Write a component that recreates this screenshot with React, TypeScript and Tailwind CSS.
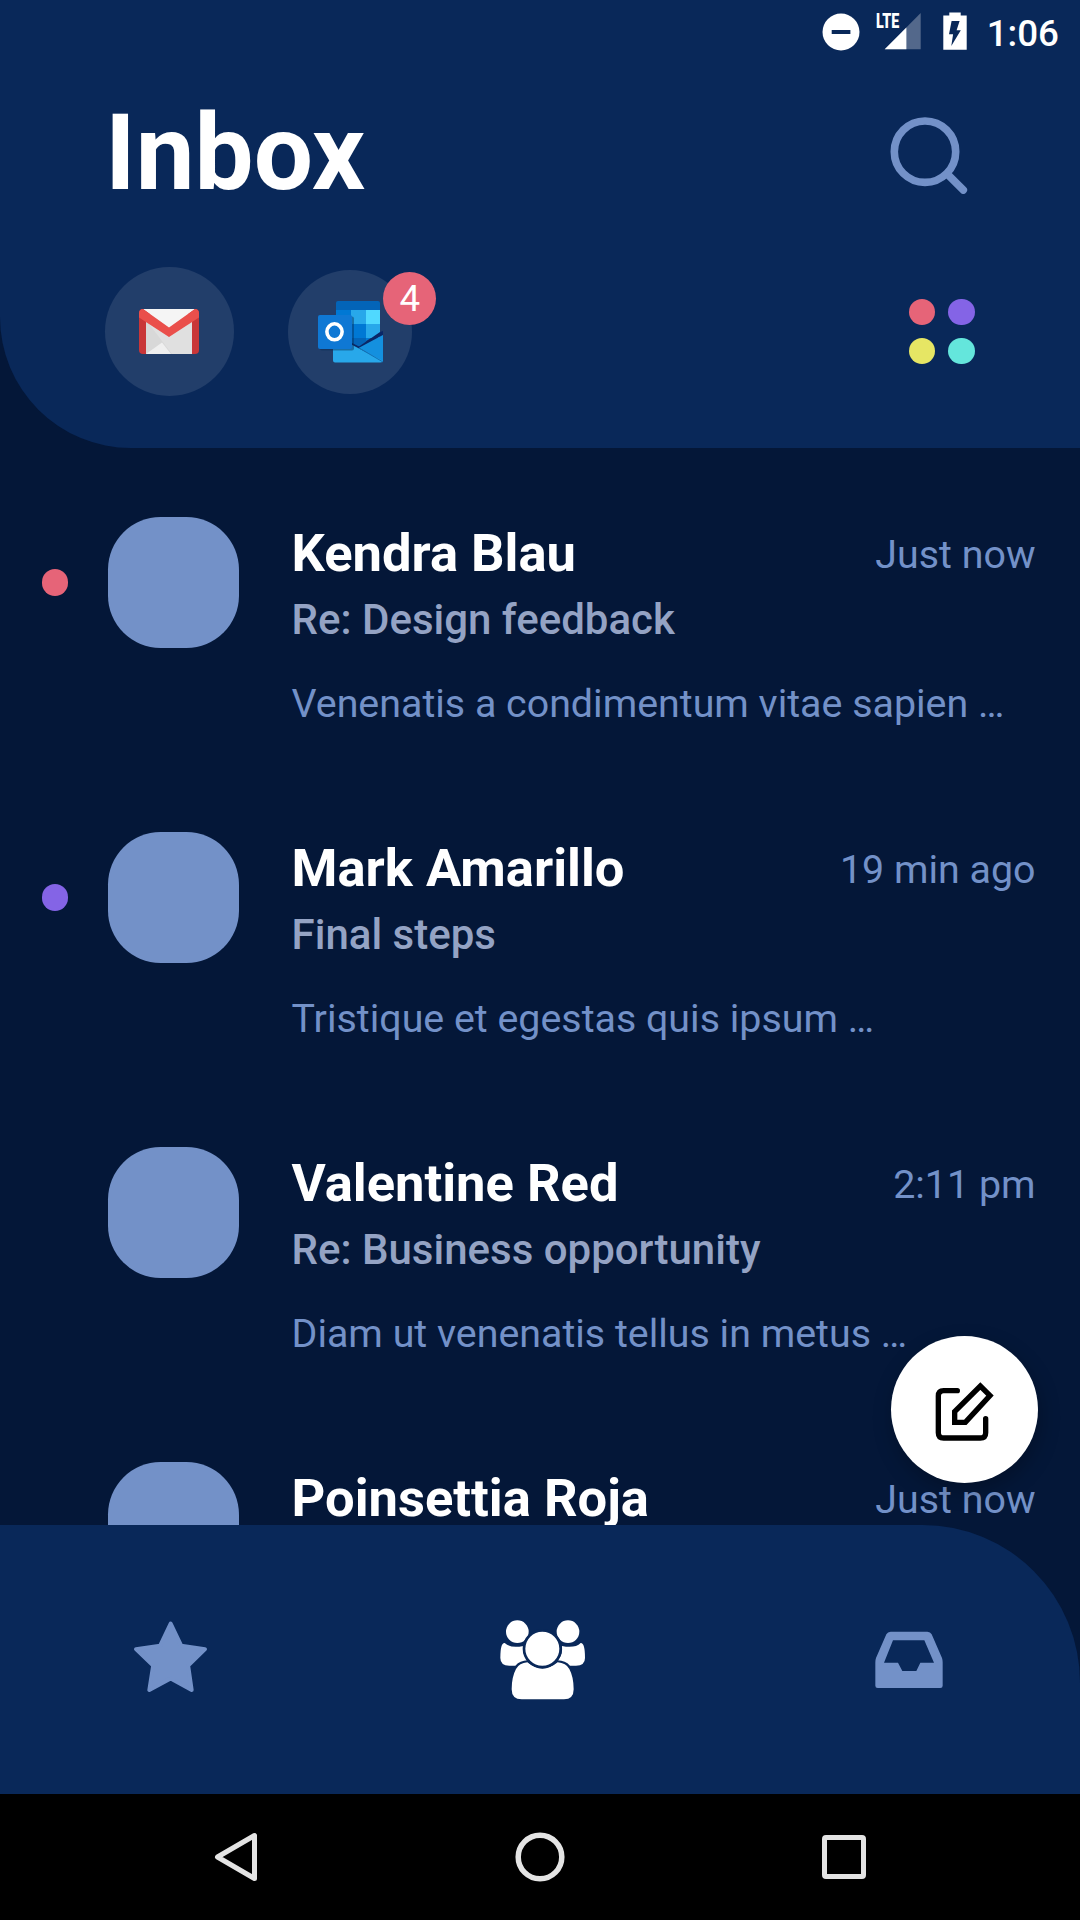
type Mail = {
  name: string;
  time: string;
  subject?: string;
  preview?: string;
  dot?: string;
};

const mails: Mail[] = [
  { name: "Kendra Blau", time: "Just now", subject: "Re: Design feedback", preview: "Venenatis a condimentum vitae sapien …", dot: "bg-[#e66478]" },
  { name: "Mark Amarillo", time: "19 min ago", subject: "Final steps", preview: "Tristique et egestas quis ipsum …", dot: "bg-[#8464e6]" },
  { name: "Valentine Red", time: "2:11 pm", subject: "Re: Business opportunity", preview: "Diam ut venenatis tellus in metus …" },
  { name: "Poinsettia Roja", time: "Just now" },
];

function StatusBar() {
  return (
    <div className="flex h-[63px] items-start justify-end pr-[21px] text-white">
      <svg className="mt-[13px] h-[38px] w-[38px]" viewBox="0 0 38 38">
        <circle cx="19" cy="19" r="18.5" fill="#fff" />
        <rect x="9.7" y="17" width="18.7" height="4" fill="#092859" />
      </svg>
      <div className="relative ml-[16px] h-[63px] w-[45px]">
        <svg className="mt-[13px] h-[37px] w-[45px]" viewBox="0 0 45 37">
          <path d="M8.7 36.2 44.7 0v36.2z" fill="#fff" fillOpacity=".3" />
          <path d="M8.7 36.2 30.4 14.4v21.8z" fill="#fff" />
        </svg>
        <span className="absolute left-0 top-[9px] origin-left scale-x-[0.68] text-[21px] leading-[25px] font-black">LTE</span>
      </div>
      <svg className="mt-[12px] ml-[22px] h-[38px] w-[24px]" viewBox="0 0 24 38">
        <path d="M6.3.5h11.4V3.5H23.7V37.7H.3V3.5h6z" fill="#fff" />
        <path d="M8.6 9h8l-3 9.2h4.2L8.3 34l1.8-11.8H6z" fill="#092859" />
      </svg>
      <span className="mt-[12px] ml-[20px] text-[36.75px] leading-[43px] font-medium">1:06</span>
    </div>
  );
}

function GmailIcon() {
  return (
    <svg className="h-[45px] w-[60px] -translate-x-px" viewBox="0 0 60 45">
      <rect width="60" height="45" rx="4" fill="#c93638" />
      <path d="M7 5h46v40H7z" fill="#e0e0e0" />
      <path d="M7 11 33 45H7z" fill="#d8d8d8" />
      <path d="M7 45 23 33.500 32 45z" fill="#efefef" />
      <path d="M4 0h52L30 19z" fill="#f5f5f5" />
      <path d="M4 0 30 18.500 56 0c2.500 0 4 2 4 4v4.500L30 28 0 8.500V4c0-2 1.500-4 4-4z" fill="#ea4f4b" />
    </svg>
  );
}

function OutlookIcon() {
  return (
    <svg className="h-[62px] w-[66px] translate-x-px" viewBox="0 0 66 62">
      <rect x="18" y="0" width="44" height="36" rx="2" fill="#0364b8" />
      <path d="M18 9h15v14H18z" fill="#0078d4" />
      <path d="M33 9h15v14H33z" fill="#28a8ea" />
      <path d="M48 9h14v14H48z" fill="#50d9ff" />
      <path d="M33 23h15v14H33z" fill="#0078d4" />
      <path d="M48 23h14v14H48z" fill="#28a8ea" />
      <path d="M33 37h15v6L41 46l-8-4z" fill="#0364b8" />
      <path d="M48 37h5l-5 3z" fill="#0078d4" />
      <path d="M62 31 65 30v4L41 47.500 33 43.500v-2l8 4z" fill="#0a2767" />
      <path d="M65 34v27L41 46.800z" fill="#1490df" />
      <path d="M15 34 65 60q-1 1.500-3 1.500H17q-2 0-2-2z" fill="#28a8ea" />
      <path d="m41 47 24 14" stroke="#1273b8" strokeWidth="1" />
      <rect x="2" y="15.500" width="34" height="34" rx="2" fill="#062c57" fillOpacity=".45" />
      <rect x="0" y="14" width="34" height="34" rx="2" fill="#0f78d4" />
      <ellipse cx="16.500" cy="30.800" rx="7.600" ry="8" fill="none" stroke="#fff" strokeWidth="3.600" />
    </svg>
  );
}

function Header() {
  return (
    <header className="h-[448px] shrink-0 rounded-bl-[131px] bg-[#092859]">
      <StatusBar />
      <div className="flex h-[177px] items-start justify-between pl-[105px] pr-[112px]">
        <h1 className="mt-[29px] text-[105px] leading-[124px] font-bold text-white">Inbox</h1>
        <svg className="mt-[53px] h-[78px] w-[78px]" viewBox="0 0 78 78" fill="none" stroke="#7391c8" strokeWidth="7.600" strokeLinecap="round">
          <circle cx="35" cy="35.700" r="30.700" />
          <path d="M58 58.700 73.300 74" />
        </svg>
      </div>
      <div className="flex items-center pl-[105px] pt-[27px]">
        <div className="flex h-[129px] w-[129px] items-center justify-center rounded-full bg-white/10">
          <GmailIcon />
        </div>
        <div className="relative ml-[54.3px] flex h-[124px] w-[124px] items-center justify-center rounded-full bg-white/10">
          <OutlookIcon />
          <span className="absolute top-[2px] left-[95px] flex h-[53px] w-[53px] items-center justify-center rounded-full bg-[#e66478] text-[36.75px] leading-[43px] text-white">4</span>
        </div>
        <div className="ml-auto mr-[105.3px] grid grid-cols-2 gap-[13px]">
          <i className="h-[26.25px] w-[26.25px] rounded-full bg-[#e66478]" />
          <i className="h-[26.25px] w-[26.25px] rounded-full bg-[#8464e6]" />
          <i className="h-[26.25px] w-[26.25px] rounded-full bg-[#e6e664]" />
          <i className="h-[26.25px] w-[26.25px] rounded-full bg-[#64e6dc]" />
        </div>
      </div>
    </header>
  );
}

function MailRow({ mail }: { mail: Mail }) {
  return (
    <li className="flex h-[315px] items-start pl-[42px] pr-[44.5px]">
      <div className="flex h-[131px] w-[65.5px] shrink-0 items-center">
        {mail.dot && <i className={`h-[26.25px] w-[26.25px] rounded-full ${mail.dot}`} />}
      </div>
      <div className="h-[131.25px] w-[131.25px] shrink-0 rounded-[52.5px] bg-[#7391c8]" />
      <div className="ml-[52.8px] min-w-0 flex-1">
        <div className="mt-[5px] flex items-baseline justify-between">
          <h2 className="text-[52.5px] leading-[62px] font-bold text-white">{mail.name}</h2>
          <span className="-translate-y-[3px] text-[39.375px] leading-[46px] text-[#7391c8]">{mail.time}</span>
        </div>
        {mail.subject && <p className="mt-[11px] text-[42px] leading-[50px] font-medium text-[#94a3c4]">{mail.subject}</p>}
        {mail.preview && <p className="mt-[36px] text-[39.375px] leading-[46px] whitespace-nowrap text-[#7391c8]">{mail.preview}</p>}
      </div>
    </li>
  );
}

function ComposeButton() {
  return (
    <button className="absolute left-[891px] top-[1336px] flex h-[147px] w-[147px] items-center justify-center rounded-full bg-white shadow-[2px_8px_20px_rgba(0,0,0,0.25)]">
      <svg className="h-[147px] w-[147px]" viewBox="93 78 441 441" fill="none" stroke="#000" strokeWidth="16" strokeLinecap="round">
        <path d="M292 242H251Q235 242 235 258V368Q235 384 251 384H361Q377 384 377 368V326" />
        <path d="M284 337V305L361 228 390 257 316 337z" />
      </svg>
    </button>
  );
}

function TabBar() {
  return (
    <nav className="flex h-[269px] shrink-0 items-start rounded-tr-[157.5px] bg-[#092859]">
      <svg className="mt-[75px] ml-[110px] h-[120px] w-[120px]" viewBox="0 0 360 360" fill="#7391c8" stroke="#7391c8" strokeWidth="12" strokeLinejoin="round">
        <path d="M182 71 213.500 137 285 147.500 234.500 197 245 270 182 235.500 118 270 129.500 197 78 147.500 150.500 137z" />
      </svg>
      <svg className="mt-[75px] ml-[250px] h-[120px] w-[130px]" viewBox="0 0 390 360" fill="#fff">
        <circle cx="112" cy="95" r="34" />
        <circle cx="264" cy="95" r="34" />
        <path d="M74 129Q91 146 130 138 127 165 143 181 120 182 106 197H88Q61 197 61 174 61 128 74 129z" />
        <path d="M302 129Q285 146 246 138 249 165 233 181 256 182 270 197H288Q315 197 315 174 315 128 302 129z" />
        <path d="M142 187Q187 225 233 187 258 189 268 207 281 231 281 268 281 298 252 298H125Q95 298 95 268 95 231 108 207 118 189 142 187z" />
        <circle cx="187" cy="146" r="55" stroke="#092859" strokeWidth="8" />
      </svg>
      <svg className="mt-[75px] ml-[240px] h-[120px] w-[120px]" viewBox="0 0 360 360" fill="#7391c8" fillRule="evenodd">
        <path d="M122 95H232Q241 95 245 103L276 174Q278 180 278 187V257Q278 264 271 264H83Q76 264 76 257V187Q76 180 78 174L109 103Q113 95 122 95zM129 121 102 188H144L157 213H199L211 188H252L223 121z" />
      </svg>
    </nav>
  );
}

function SystemBar() {
  return (
    <div className="flex h-[126px] shrink-0 items-center justify-between bg-black pl-[214px] pr-[214px]">
      <svg className="h-[50px] w-[44px]" viewBox="0 0 44 50" fill="none" stroke="#e4e4e4" strokeWidth="5" strokeLinejoin="round">
        <path d="M40.500 3.500v43L3.500 25z" />
      </svg>
      <svg className="h-[50px] w-[50px]" viewBox="0 0 50 50" fill="none" stroke="#e4e4e4" strokeWidth="5.500">
        <circle cx="25" cy="25" r="21.800" />
      </svg>
      <svg className="h-[44px] w-[44px]" viewBox="0 0 44 44" fill="none" stroke="#e4e4e4" strokeWidth="5">
        <rect x="2.500" y="2.500" width="39" height="39" rx="1.500" />
      </svg>
    </div>
  );
}

export default function App() {
  return (
    <div className="relative flex h-[1920px] w-[1080px] flex-col overflow-hidden bg-[#041738] font-['Roboto',sans-serif]">
      <Header />
      <ul className="min-h-0 flex-1 overflow-hidden pt-[69px]">
        {mails.map((mail) => (
          <MailRow key={mail.name} mail={mail} />
        ))}
      </ul>
      <TabBar />
      <SystemBar />
      <ComposeButton />
    </div>
  );
}
